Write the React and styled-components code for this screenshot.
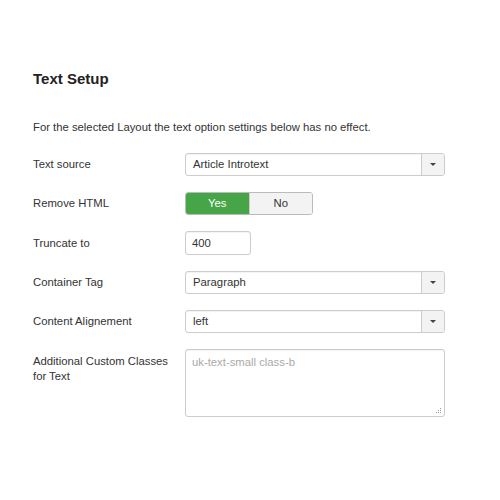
import React from "react";
import styled, { createGlobalStyle } from "styled-components";

const Global = createGlobalStyle`
  html, body { margin: 0; padding: 0; background: #fff; }
  body { font-family: "Liberation Sans", Arial, sans-serif; color: #333; }
`;

const Page = styled.div`
  width: 500px;
  height: 500px;
  box-sizing: border-box;
  padding: 69px 55px 0 33px;
`;

const Heading = styled.h2`
  margin: 0;
  font-size: 15px;
  line-height: 20px;
  font-weight: bold;
  color: #222;
`;

const Note = styled.p`
  margin: 29px 0 0;
  font-size: 11.3px;
  line-height: 18px;
  color: #333;
`;

const Form = styled.div`
  margin-top: 17px;
  display: flex;
  flex-direction: column;
  gap: 16px;
`;

const Row = styled.div`
  display: grid;
  grid-template-columns: 152px 260px;
  align-items: ${(p) => (p.$top ? "start" : "center")};
`;

const Label = styled.div`
  font-size: 11.3px;
  line-height: 15px;
  color: #333;
  padding-top: ${(p) => (p.$top ? "5px" : "0")};
  padding-right: 8px;
`;

const SelectBox = styled.div`
  display: flex;
  height: 23px;
  box-sizing: border-box;
  border: 1px solid #ccc;
  border-radius: 3px;
  background: #fff;
  box-shadow: inset 0 1px 1px rgba(0, 0, 0, 0.05);
  overflow: hidden;
`;

const SelectValue = styled.div`
  flex: 1;
  padding-left: 7px;
  font-size: 11.3px;
  line-height: 21px;
  color: #333;
`;

const Caret = styled.div`
  width: 22px;
  border-left: 1px solid #ccc;
  background: #f3f3f3;
  display: flex;
  align-items: center;
  justify-content: center;
  &::after {
    content: "";
    border-left: 3px solid transparent;
    border-right: 3px solid transparent;
    border-top: 3px solid #444;
  }
`;

const Toggle = styled.div`
  display: flex;
  width: 128px;
  height: 23px;
  box-sizing: border-box;
  border: 1px solid #bbb;
  border-radius: 3px;
  overflow: hidden;
`;

const ToggleBtn = styled.div`
  flex: 1;
  text-align: center;
  font-size: 11.3px;
  line-height: 21px;
  background: ${(p) => (p.$active ? "#46a546" : "#f3f3f3")};
  color: ${(p) => (p.$active ? "#fff" : "#333")};
  border-left: ${(p) => (p.$first ? "none" : "1px solid #ccc")};
`;

const TextInput = styled.div`
  width: 66px;
  height: 24px;
  box-sizing: border-box;
  border: 1px solid #ccc;
  border-radius: 3px;
  padding-left: 6px;
  font-size: 11.3px;
  line-height: 22px;
  color: #333;
  box-shadow: inset 0 1px 1px rgba(0, 0, 0, 0.05);
`;

const AreaWrap = styled.div`
  position: relative;
  height: 68px;
  box-sizing: border-box;
  border: 1px solid #ccc;
  border-radius: 3px;
  box-shadow: inset 0 1px 1px rgba(0, 0, 0, 0.05);
`;

const Placeholder = styled.div`
  padding: 4px 0 0 6px;
  font-size: 11.3px;
  line-height: 16px;
  color: #aaa;
`;

const Grip = styled.svg`
  position: absolute;
  right: 2px;
  bottom: 2px;
`;

function Select({ value }) {
  return (
    <SelectBox>
      <SelectValue>{value}</SelectValue>
      <Caret />
    </SelectBox>
  );
}

export default function App() {
  return (
    <Page>
      <Global />
      <Heading>Text Setup</Heading>
      <Note>For the selected Layout the text option settings below has no effect.</Note>
      <Form>
        <Row>
          <Label>Text source</Label>
          <Select value="Article Introtext" />
        </Row>
        <Row>
          <Label>Remove HTML</Label>
          <Toggle>
            <ToggleBtn $active $first>Yes</ToggleBtn>
            <ToggleBtn>No</ToggleBtn>
          </Toggle>
        </Row>
        <Row>
          <Label>Truncate to</Label>
          <TextInput>400</TextInput>
        </Row>
        <Row>
          <Label>Container Tag</Label>
          <Select value="Paragraph" />
        </Row>
        <Row>
          <Label>Content Alignement</Label>
          <Select value="left" />
        </Row>
        <Row $top>
          <Label $top>Additional Custom Classes for Text</Label>
          <AreaWrap>
            <Placeholder>uk-text-small class-b</Placeholder>
            <Grip width="7" height="7" viewBox="0 0 7 7">
              <rect x="5" y="1" width="1" height="1" fill="#999" />
              <rect x="3" y="3" width="1" height="1" fill="#999" />
              <rect x="5" y="3" width="1" height="1" fill="#999" />
              <rect x="1" y="5" width="1" height="1" fill="#999" />
              <rect x="3" y="5" width="1" height="1" fill="#999" />
              <rect x="5" y="5" width="1" height="1" fill="#999" />
            </Grip>
          </AreaWrap>
        </Row>
      </Form>
    </Page>
  );
}
